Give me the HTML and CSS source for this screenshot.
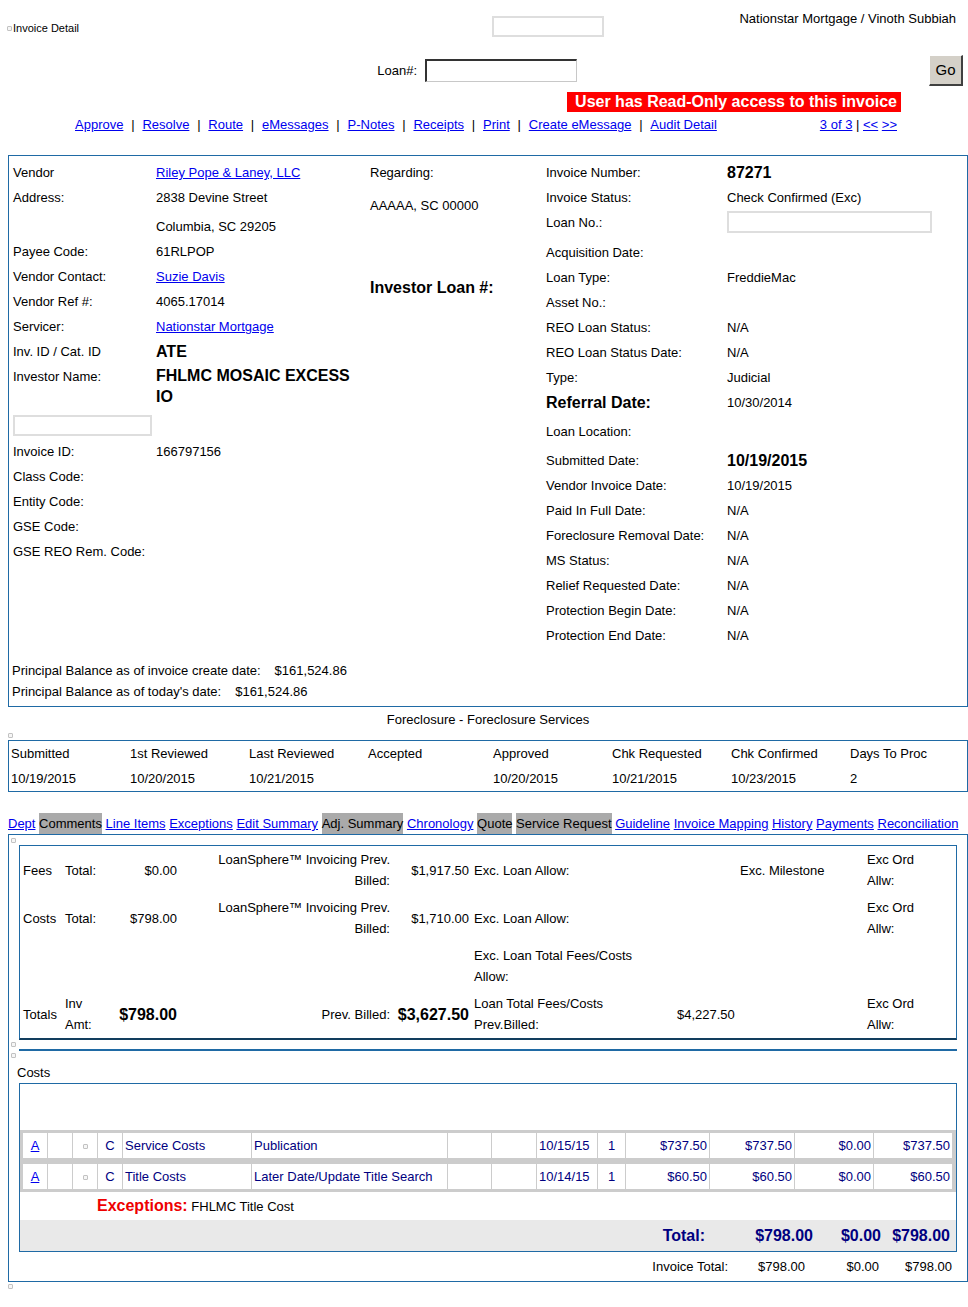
FILE: index.html
```html
<!DOCTYPE html>
<html>
<head>
<meta charset="utf-8">
<title>Invoice Detail</title>
<link rel="stylesheet" href="styles.css">
</head>
<body>
<div class="hdr-top">
  <div class="title"><span class="bimg"></span>Invoice Detail</div>
  <div class="blank-box"></div>
  <div class="user">Nationstar Mortgage / Vinoth Subbiah</div>
</div>
<div class="hdr-loan">
  <div class="loan-label">Loan#:</div>
  <div class="loan-input"></div>
  <div class="go-btn">Go</div>
</div>
<div class="hdr-banner"><span class="banner">User has Read-Only access to this invoice</span></div>
<div class="hdr-nav">
  <div class="nav-links">
    <a href="#">Approve</a><span class="sep">|</span><a href="#">Resolve</a><span class="sep">|</span><a href="#">Route</a><span class="sep">|</span><a href="#">eMessages</a><span class="sep">|</span><a href="#">P-Notes</a><span class="sep">|</span><a href="#">Receipts</a><span class="sep">|</span><a href="#">Print</a><span class="sep">|</span><a href="#">Create eMessage</a><span class="sep">|</span><a href="#">Audit Detail</a>
  </div>
  <div class="pager"><a href="#">3 of 3</a> |&nbsp;<a href="#">&lt;&lt;</a> <a href="#">&gt;&gt;</a></div>
</div>

<div class="page">
  <div class="box box-info">
    <div class="info">
      <div class="kv kv-left">
        <div>Vendor</div><div><a href="#">Riley Pope &amp; Laney, LLC</a></div>
        <div>Address:</div><div>2838 Devine Street</div>
        <div class="pt8"></div><div class="pt8">Columbia, SC 29205</div>
        <div>Payee Code:</div><div>61RLPOP</div>
        <div>Vendor Contact:</div><div><a href="#">Suzie Davis</a></div>
        <div>Vendor Ref #:</div><div>4065.17014</div>
        <div>Servicer:</div><div><a href="#">Nationstar Mortgage</a></div>
        <div>Inv. ID / Cat. ID</div><div class="b16">ATE</div>
        <div>Investor Name:</div><div class="b16 multi">FHLMC MOSAIC EXCESS IO</div>
        <div class="inp-cell"><span class="field field-sm"></span></div><div class="inp-cell"></div>
        <div>Invoice ID:</div><div>166797156</div>
        <div>Class Code:</div><div></div>
        <div>Entity Code:</div><div></div>
        <div>GSE Code:</div><div></div>
        <div>GSE REO Rem. Code:</div><div></div>
      </div>
      <div class="mid">
        <div class="regarding">Regarding:</div>
        <div class="addr">AAAAA, SC 00000</div>
        <div class="inv-loan">Investor Loan #:</div>
      </div>
      <div class="kv kv-right">
        <div>Invoice Number:</div><div class="b16">87271</div>
        <div>Invoice Status:</div><div>Check Confirmed (Exc)</div>
        <div>Loan No.:</div><div class="loan-cell"><span class="field field-lg"></span></div>
        <div>Acquisition Date:</div><div></div>
        <div>Loan Type:</div><div>FreddieMac</div>
        <div>Asset No.:</div><div></div>
        <div>REO Loan Status:</div><div>N/A</div>
        <div>REO Loan Status Date:</div><div>N/A</div>
        <div>Type:</div><div>Judicial</div>
        <div class="b16 pb8">Referral Date:</div><div class="pb8">10/30/2014</div>
        <div>Loan Location:</div><div></div>
        <div class="pt8">Submitted Date:</div><div class="pt8 b16">10/19/2015</div>
        <div>Vendor Invoice Date:</div><div>10/19/2015</div>
        <div>Paid In Full Date:</div><div>N/A</div>
        <div>Foreclosure Removal Date:</div><div>N/A</div>
        <div>MS Status:</div><div>N/A</div>
        <div>Relief Requested Date:</div><div>N/A</div>
        <div>Protection Begin Date:</div><div>N/A</div>
        <div>Protection End Date:</div><div>N/A</div>
      </div>
    </div>
    <div class="principal">
      <div>Principal Balance as of invoice create date:<span class="amt">$161,524.86</span></div>
      <div>Principal Balance as of today's date:<span class="amt">$161,524.86</span></div>
    </div>
  </div>

  <div class="caption">Foreclosure - Foreclosure Services</div>
  <span class="bimg bimg-block icon-a"></span>

  <div class="box dates">
    <div>Submitted</div><div>1st Reviewed</div><div>Last Reviewed</div><div>Accepted</div><div>Approved</div><div>Chk Requested</div><div>Chk Confirmed</div><div>Days To Proc</div>
    <div>10/19/2015</div><div>10/20/2015</div><div>10/21/2015</div><div></div><div>10/20/2015</div><div>10/21/2015</div><div>10/23/2015</div><div>2</div>
  </div>

  <div class="tabs"><a href="#">Dept</a> <span class="tab-on">Comments</span> <a href="#">Line Items</a> <a href="#">Exceptions</a> <a href="#">Edit Summary</a> <span class="tab-on">Adj. Summary</span> <a href="#">Chronology</a> <span class="tab-on">Quote</span> <span class="tab-on">Service Request</span> <a href="#">Guideline</a> <a href="#">Invoice Mapping</a> <a href="#">History</a> <a href="#">Payments</a> <a href="#">Reconciliation</a></div>

  <div class="box box3">
    <span class="bimg bimg-block icon-b"></span>
    <div class="fees">
      <div>Fees</div><div>Total:</div><div class="r">$0.00</div><div class="r">LoanSphere™ Invoicing Prev. Billed:</div><div class="r c5">$1,917.50</div><div class="c6">Exc. Loan Allow:</div><div></div><div>Exc. Milestone</div><div>Exc Ord Allw:</div><div></div>
      <div>Costs</div><div>Total:</div><div class="r">$798.00</div><div class="r">LoanSphere™ Invoicing Prev. Billed:</div><div class="r c5">$1,710.00</div><div class="c6">Exc. Loan Allow:</div><div></div><div></div><div>Exc Ord Allw:</div><div></div>
      <div></div><div></div><div></div><div></div><div></div><div class="c6">Exc. Loan Total Fees/Costs Allow:</div><div></div><div></div><div></div><div></div>
      <div>Totals</div><div>Inv Amt:</div><div class="r bold16">$798.00</div><div class="r">Prev. Billed:</div><div class="r c5 bold16">$3,627.50</div><div class="c6">Loan Total Fees/Costs Prev.Billed:</div><div>$4,227.50</div><div></div><div>Exc Ord Allw:</div><div></div>
    </div>
    <span class="bimg bimg-block icon-c"></span>
    <div class="rule"></div>
    <span class="bimg bimg-block icon-c"></span>
    <div class="costs-label">Costs</div>
    <div class="costs">
      <div class="costs-head"></div>
      <div class="li">
        <div class="ctr"><a href="#">A</a></div><div></div><div class="ctr"><span class="bimg bimg-sm"></span></div><div class="ctr">C</div><div>Service Costs</div><div>Publication</div><div></div><div></div><div>10/15/15</div><div class="ctr">1</div><div class="r">$737.50</div><div class="r">$737.50</div><div class="r">$0.00</div><div class="r">$737.50</div>
      </div>
      <div class="li">
        <div class="ctr"><a href="#">A</a></div><div></div><div class="ctr"><span class="bimg bimg-sm"></span></div><div class="ctr">C</div><div>Title Costs</div><div>Later Date/Update Title Search</div><div></div><div></div><div>10/14/15</div><div class="ctr">1</div><div class="r">$60.50</div><div class="r">$60.50</div><div class="r">$0.00</div><div class="r">$60.50</div>
      </div>
      <div class="exc"><span class="exc-label">Exceptions:</span> FHLMC Title Cost</div>
      <div class="tot">
        <div>Total:</div><div>$798.00</div><div>$0.00</div><div>$798.00</div><div></div>
      </div>
    </div>
    <div class="inv-total">
      <div>Invoice Total:</div><div>$798.00</div><div>$0.00</div><div>$798.00</div><div></div>
    </div>
  </div>
  <span class="bimg bimg-block icon-d"></span>
</div>
</body>
</html>
```
FILE: styles.css
```css
* { box-sizing: border-box; }

body {
  margin: 0;
  font-family: "Liberation Sans", Arial, Helvetica, sans-serif;
  font-size: 13px;
  color: #000;
  background: #fff;
}

a { color: #0000ee; text-decoration: underline; }

.bimg {
  display: inline-block;
  width: 5px;
  height: 5px;
  border: 1px solid #c2c2c2;
  border-radius: 1px;
  background: #f6f6f6;
}
.bimg-block { display: block; }
.bimg-sm { width: 5px; height: 5px; vertical-align: middle; }

/* header */
.hdr-top {
  display: grid;
  grid-template-columns: 492px 112px 1fr;
  height: 46px;
}
.title {
  display: flex;
  align-items: center;
  gap: 1px;
  padding: 22px 0 0 7px;
  height: 34px;
  font-size: 11px;
  line-height: 12px;
}
.blank-box {
  margin-top: 16px;
  height: 21px;
  border: 2px solid #dedede;
}
.user {
  text-align: right;
  padding: 11px 12px 0 0;
  line-height: 16px;
}

.hdr-loan {
  display: grid;
  grid-template-columns: 425px 152px 1fr;
  align-items: center;
  margin-top: 9px;
  height: 31px;
}
.loan-label {
  text-align: right;
  padding-right: 8px;
  line-height: 17px;
}
.loan-input {
  height: 23px;
  border-style: solid;
  border-width: 2px 1px 1px 2px;
  border-color: #333 #c8c8c8 #c8c8c8 #333;
}
.go-btn {
  justify-self: end;
  margin-right: 5px;
  width: 34px;
  height: 31px;
  background: #d4d0c8;
  border-style: solid;
  border-width: 1px 2px 2px 1px;
  border-color: #fff #404040 #404040 #fff;
  font-size: 15px;
  line-height: 28px;
  text-align: center;
}

.hdr-banner {
  display: flex;
  justify-content: flex-end;
  margin-top: 6px;
  padding-right: 67px;
}
.banner {
  background: #ff0000;
  color: #fff;
  font-weight: bold;
  font-size: 16px;
  line-height: 20px;
  padding: 0 4px 0 8px;
}

.hdr-nav {
  display: flex;
  margin-top: 4px;
  padding-left: 75px;
  padding-right: 71px;
  line-height: 17px;
}
.sep { margin: 0 7.8px; }
.pager { margin-left: auto; }

/* page body */
.page {
  width: 960px;
  margin-left: 8px;
}
.box { border: 1px solid #1f6aa5; }

.box-info { margin-top: 22px; }
.info {
  display: flex;
  align-items: flex-start;
  padding: 4px 0 0 4px;
}
.kv { display: grid; align-items: start; align-content: start; }
.kv > div { padding: 4px 0; line-height: 17px; }
.kv-left { grid-template-columns: 143px 214px; }
.kv-right { grid-template-columns: 181px 1fr; flex: 1; }
.mid { width: 176px; line-height: 17px; }
.regarding { padding-top: 4px; }
.addr { margin-top: 16px; }
.inv-loan { margin-top: 65px; font-weight: bold; font-size: 16px; }

.b16 { font-weight: bold; font-size: 16px; }
.kv > .pt8 { padding-top: 8px; }
.kv > .pb8 { padding-bottom: 8px; }
.kv > .multi { padding-top: 1px; line-height: 21px; }
.kv > .inp-cell { padding: 4px 0 3px 0; }
.kv > .loan-cell { padding: 1px 0 7px 0; }

.field {
  display: block;
  border: 2px solid #dedede;
  background: #fff;
}
.field-sm { width: 139px; height: 21px; }
.field-lg { width: 205px; height: 22px; }

.principal {
  margin-top: 12px;
  padding: 0 0 4px 3px;
  line-height: 21px;
}
.amt { margin-left: 14px; }

.caption {
  margin-top: 4px;
  text-align: center;
  line-height: 17px;
}
.icon-a { margin: 5px 0 2px 0; }

.dates {
  display: grid;
  grid-template-columns: 119px 119px 119px 125px 119px 119px 119px 1fr;
  padding-left: 2px;
}
.dates > div { padding: 4px 0; line-height: 17px; }

.tabs {
  margin-top: 21px;
  white-space: nowrap;
  line-height: 21px;
  height: 21px;
}
.tab-on { display: inline-block; background: #aaa; }

.icon-b { margin: 3px 0 0 2px; }
.icon-c { margin: 2px 0 0 2px; }
.icon-d { margin: 2px 0 0 0; }

.fees {
  margin: 2px 10px 0 10px;
  border: 1px solid #1f6aa5;
  border-bottom: 2px solid #123e5e;
  display: grid;
  grid-template-columns: 42px 40px 78px 213px 78px 203px 63px 127px 66px 1fr;
  align-items: center;
}
.fees > div { padding: 3px; line-height: 21px; }
.fees > .r { text-align: right; }
.fees > .c5 { padding-right: 2px; }
.fees > .c6 { padding-right: 8px; }
.bold16 { font-weight: bold; font-size: 16px; }

.rule {
  margin: 2px 10px 0 10px;
  height: 2px;
  background: #1f6aa5;
}
.costs-label {
  margin-top: 6px;
  padding-left: 8px;
  line-height: 17px;
}
.costs {
  margin: 2px 10px 0 10px;
  border: 1px solid #1f6aa5;
}
.costs-head { height: 46px; }
.li {
  display: grid;
  grid-template-columns: 24px 24px 24px 24px 128px 195px 43px 44px 60px 27px 83px 84px 78px 78px;
  gap: 1px;
  padding: 3px 4px 3px 3px;
  background: #ccc;
}
.li > div {
  background: #fff;
  color: #000080;
  padding: 4px 2px;
  line-height: 17px;
  height: 25px;
  white-space: nowrap;
}
.li > .r { text-align: right; }
.li > .ctr { text-align: center; }

.exc {
  padding: 5px 0 5px 77px;
  line-height: 17px;
}
.exc-label { color: #ee0000; font-weight: bold; font-size: 16px; }

.tot {
  display: grid;
  grid-template-columns: 689px 108px 68px 69px 1fr;
  align-items: center;
  height: 31px;
  background: #e9e9e9;
  color: #000080;
  font-weight: bold;
  font-size: 16px;
}
.tot > div { text-align: right; padding-right: 4px; }

.inv-total {
  display: grid;
  grid-template-columns: 723px 77px 74px 73px 1fr;
  padding: 6px 0;
  line-height: 17px;
}
.inv-total > div { text-align: right; padding-right: 4px; }
```
